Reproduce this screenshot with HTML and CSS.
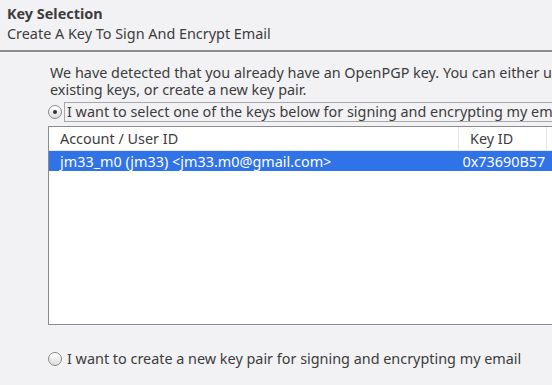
FILE: index.html
```html
<!DOCTYPE html>
<html>
<head>
<title>Key Selection</title>
<link rel="stylesheet" href="styles.css">
</head>
<body>
<div class="header">
	<div class="title">Key Selection</div>
	<div class="subtitle">Create A Key To Sign And Encrypt Email</div>
</div>
<div class="content">
	<p class="intro">We have detected that you already have an OpenPGP key. You can either use one of your existing keys, or create a new key pair.</p>
	<div class="option">
		<span class="radio checked"></span>
		<span class="label focused">I want to select one of the keys below for signing and encrypting my email</span>
	</div>
	<div class="keys">
		<table class="key_table">
			<thead>
				<tr>
					<th class="col_user">Account / User ID</th>
					<th class="col_key">Key ID</th>
					<th class="col_extra"></th>
				</tr>
			</thead>
			<tbody>
				<tr class="selected">
					<td>jm33_m0 (jm33) &lt;jm33.m0@gmail.com&gt;</td>
					<td>0x73690B57</td>
					<td></td>
				</tr>
			</tbody>
		</table>
	</div>
	<div class="option second">
		<span class="radio"></span>
		<span class="label">I want to create a new key pair for signing and encrypting my email</span>
	</div>
</div>
</body>
</html>
```

FILE: styles.css
```css
html, body {
	margin: 0;
	padding: 0;
	background-color: #f2f2f4;
	font-family: "Noto Sans", sans-serif;
	font-size: 14.4px;
	color: #3c3c3c;
	overflow: hidden;
	width: 552px;
	height: 385px;
}

.header {
	padding: 4px 7px 6px 7px;
	border-bottom: 2px solid #8c8c8c;
}

.title {
	font-weight: bold;
	line-height: 20px;
}

.subtitle {
	line-height: 20px;
}

.content {
	padding: 12px 0 0 48px;
	width: 700px;
}

.intro {
	margin: 0 0 0 2px;
	width: 610px;
	line-height: 17px;
}

.option {
	display: flex;
	align-items: center;
	margin-top: 4px;
	white-space: nowrap;
}

.radio {
	width: 12px;
	height: 12px;
	border: 1px solid #8a8a8a;
	border-radius: 50%;
	background: linear-gradient(#ffffff, #dcdcdc);
	position: relative;
	margin-right: 2px;
}

.radio.checked::after {
	content: "";
	position: absolute;
	left: 4px;
	top: 4px;
	width: 4px;
	height: 4px;
	border-radius: 50%;
	background-color: #333;
}

.label {
	line-height: 18px;
	padding: 0 2px;
	border: 1px solid transparent;
}

.label.focused {
	border-color: #a8a8a8;
	border-right: 0;
}

.keys {
	margin-top: 4px;
	height: 197px;
	background-color: white;
	border: 1px solid #8c8c8c;
	border-right: 0;
}

.key_table {
	border-collapse: collapse;
	width: 540px;
	table-layout: fixed;
}

.key_table th {
	font-weight: normal;
	text-align: left;
	height: 23px;
	padding: 0 0 0 11px;
	border-bottom: 1px solid #e4e4e4;
}

.key_table th + th {
	border-left: 1px solid #e4e4e4;
}

.col_user {
	width: 398px;
}

.col_key {
	width: 76px;
}

.key_table td {
	height: 20px;
	padding: 0 0 0 11px;
}

.key_table td + td {
	padding-left: 4px;
}

.selected td {
	background-color: #3072e8;
	color: white;
}

.second {
	margin-top: 24px;
}
```
